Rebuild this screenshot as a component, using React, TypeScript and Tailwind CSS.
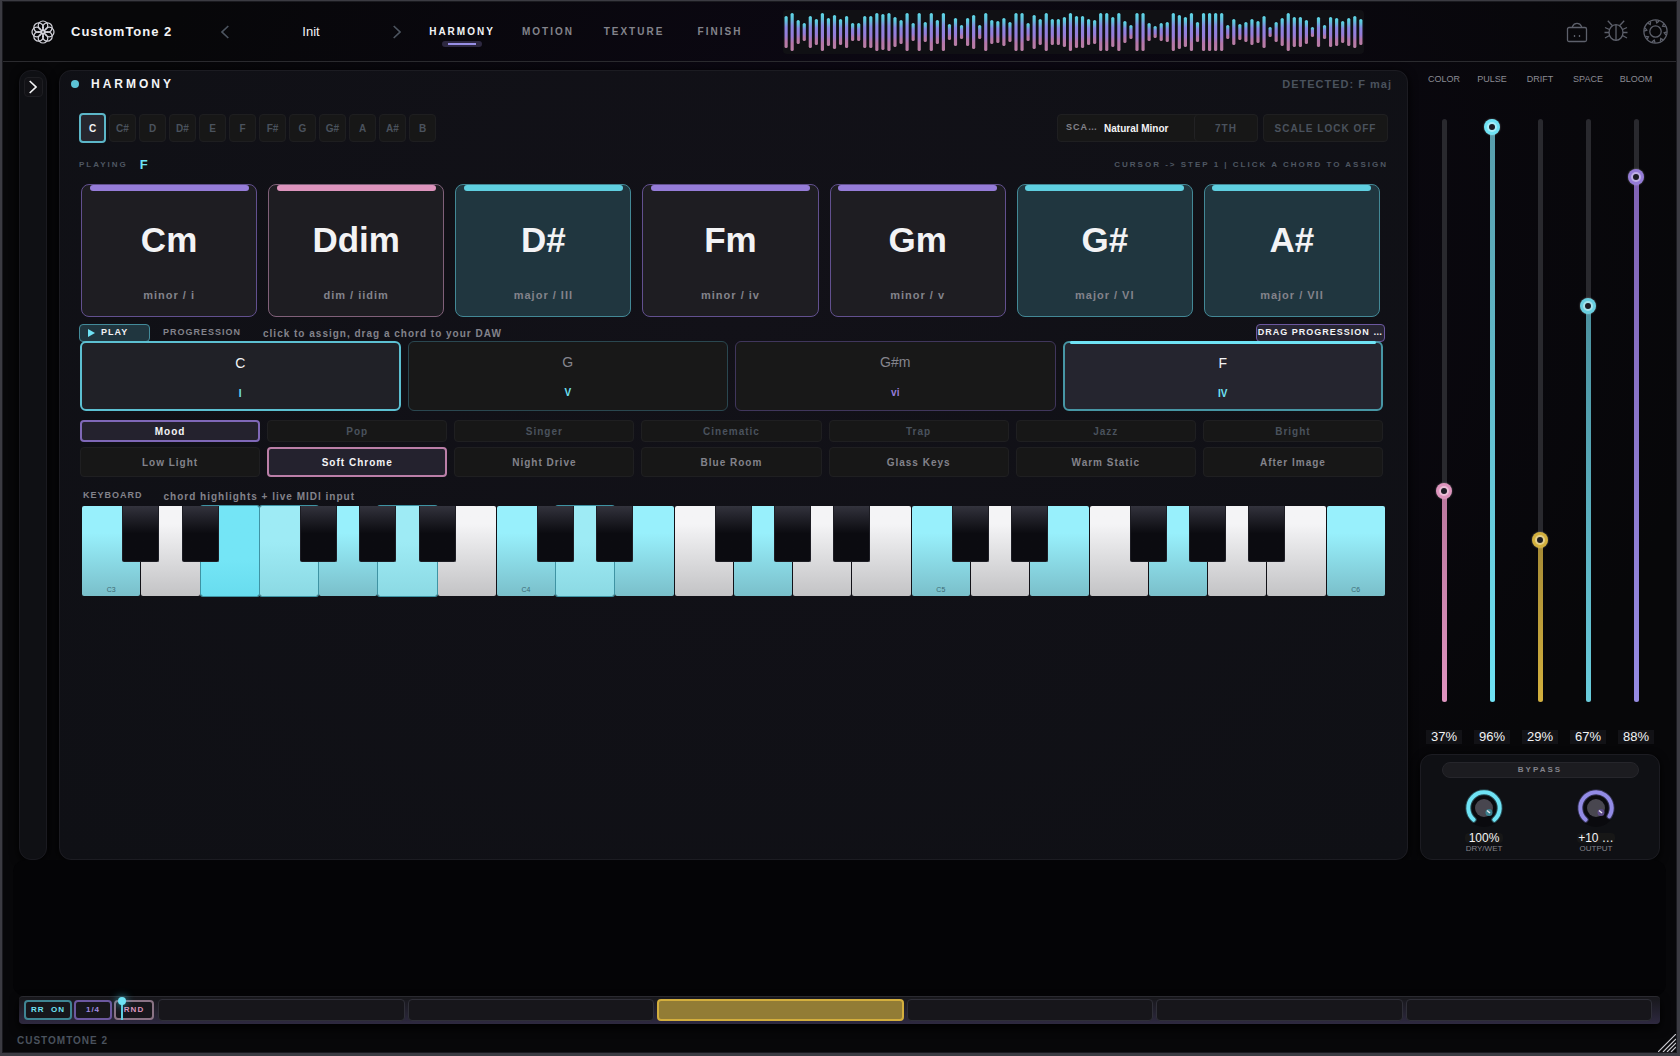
import React, { useState } from "react";
import clsx from "clsx";

const WAVE = [
  16, 19, 12, 9, 16, 13, 19, 14, 17, 13, 16, 9, 9, 16, 16, 19, 18, 19, 15, 12, 19, 9, 19, 10,
  19, 12, 19, 8, 14, 7, 14, 17, 7, 19, 12, 11, 14, 10, 19, 19, 9, 17, 13, 19, 13, 13, 15, 19,
  16, 16, 13, 12, 19, 19, 15, 19, 11, 7, 19, 19, 9, 6, 9, 10, 19, 17, 15, 19, 10, 19, 19, 19,
  19, 7, 13, 8, 10, 13, 11, 16, 5, 10, 14, 19, 15, 15, 12, 5, 15, 7, 15, 14, 11, 14, 16, 13,
];

const TABS = ["HARMONY", "MOTION", "TEXTURE", "FINISH"];
const ROOTS = ["C", "C#", "D", "D#", "E", "F", "F#", "G", "G#", "A", "A#", "B"];

const CHORDS = [
  { name: "Cm", role: "minor / i", tone: "violet" },
  { name: "Ddim", role: "dim / iidim", tone: "pink" },
  { name: "D#", role: "major / III", tone: "cyan" },
  { name: "Fm", role: "minor / iv", tone: "violet" },
  { name: "Gm", role: "minor / v", tone: "violet" },
  { name: "G#", role: "major / VI", tone: "cyan" },
  { name: "A#", role: "major / VII", tone: "cyan" },
];

const CARD_TONES: Record<string, { card: string; bar: string }> = {
  violet: { card: "bg-[#1e1d22] border-[#62508f]", bar: "bg-[#957cd8]" },
  pink: { card: "bg-[#1e1d22] border-[#806079]", bar: "bg-[#dd94bd]" },
  cyan: { card: "bg-[#20363f] border-[#438896]", bar: "bg-[#5fcfe0]" },
};

const STEPS = [
  { name: "C", numeral: "I", box: "border-2 border-[#5cc0d2] bg-[#202127] text-gray-100", num: "text-[#6fe3f5]" },
  { name: "G", numeral: "V", box: "border border-[#2a4750] bg-[#181818] text-[#85858d]", num: "text-[#6fe3f5]" },
  { name: "G#m", numeral: "vi", box: "border border-[#40365c] bg-[#181818] text-[#85858d]", num: "text-[#957cd8]" },
  { name: "F", numeral: "IV", box: "border-2 border-[#4796a5] bg-[#25252f] text-gray-100", num: "text-[#6fe3f5]" },
];

const MOODS = ["Mood", "Pop", "Singer", "Cinematic", "Trap", "Jazz", "Bright"];
const PRESETS = ["Low Light", "Soft Chrome", "Night Drive", "Blue Room", "Glass Keys", "Warm Static", "After Image"];

// one letter per white key: w = idle, c = in scale, h = in chord, p = pressed
const KEYS = "cwphchwchcwcwwcwcwcwwc".split("");
const KEY_STYLES: Record<string, string> = {
  w: "bg-gradient-to-b from-[#f4f4f6] from-20% to-[#c3c3c5]",
  c: "bg-gradient-to-b from-[#98f0fc] from-30% to-[#7abfca]",
  h: "bg-gradient-to-b from-[#9eebf5] from-40% to-[#8bd9e3] shadow-[0_0_0_1px_#3f93a3]",
  p: "bg-gradient-to-b from-[#74e5f6] from-60% to-[#68dcee] shadow-[0_0_0_1px_#3f93a3]",
};

const MACROS = [
  { name: "COLOR", value: 37, fill: "bg-gradient-to-b from-[#b9779d] to-[#e094c0]", thumb: "bg-[#dd94bd]" },
  { name: "PULSE", value: 96, fill: "bg-gradient-to-b from-[#579cab] to-[#6fe3f5]", thumb: "bg-[#6fe3f5]" },
  { name: "DRIFT", value: 29, fill: "bg-gradient-to-b from-[#a58a35] to-[#d3b03d]", thumb: "bg-[#d3b03d]" },
  { name: "SPACE", value: 67, fill: "bg-gradient-to-b from-[#4b909e] to-[#69ccdc]", thumb: "bg-[#69cfe0]" },
  { name: "BLOOM", value: 88, fill: "bg-gradient-to-b from-[#8062b4] to-[#958be4]", thumb: "bg-[#957cd8]" },
];

const Logo = () => (
  <svg viewBox="-12 -12 24 24" className="size-6" fill="none" stroke="#d3d3db" strokeWidth="1.2">
    {[0, 45, 90, 135, 180, 225, 270, 315].map((a) => (
      <circle key={a} cx="0" cy="-6.2" r="4.8" transform={`rotate(${a})`} />
    ))}
    <circle r="2" />
  </svg>
);

const Chevron = ({ flip, className }: { flip?: boolean; className?: string }) => (
  <svg viewBox="0 0 8 14" className={clsx("h-[14px] w-2", className)} fill="none" stroke="currentColor" strokeWidth="1.6">
    <path d={flip ? "M7.3 1 1 7l6.3 6" : "M.7 1 7 7 .7 13"} />
  </svg>
);

const LockIcon = () => (
  <svg viewBox="0 0 24 24" className="size-6" fill="none" stroke="#5d606b" strokeWidth="1.3">
    <rect x="2.5" y="7.5" width="19" height="14" rx="1.5" />
    <path d="M7.5 7.5V6.4C8.4 4.3 10 3.3 12 3.3s3.6 1 4.5 3.1v1.1M9.500 15v2M14.500 15v2" />
  </svg>
);

const BugIcon = () => (
  <svg viewBox="0 0 24 24" className="size-6" fill="none" stroke="#5d606b" strokeWidth="1.3">
    <ellipse cx="12" cy="12.5" rx="7" ry="7.8" />
    <path d="M12 5v15.500M8.500 5.800 3.800.8M15.500 5.800l4.700-5M5.400 9.500 1 7.500M5 12.500H.5M5.500 15.500 1 18M18.600 9.500 23 7.500M19 12.500h4.500M18.500 15.500 23 18" />
  </svg>
);

const GearIcon = () => (
  <svg viewBox="-12.5 -12.5 25 25" className="size-[25px]" fill="none" stroke="#5d606b" strokeWidth="1.3">
    <circle r="11.6" />
    <circle r="5.7" />
    {[10, 55, 100, 145, 190, 235, 280, 325].map((a) => (
      <path key={a} d="M-1.600-11.200-.2-8.800 1.700-11" transform={`rotate(${a})`} />
    ))}
  </svg>
);

const Waveform = () => (
  <svg viewBox="0 0 581 44" className="h-11 w-[581px] shrink-0 rounded bg-[#101014]">
    <defs>
      <linearGradient id="wave" x1="0" y1="0" x2="0" y2="1">
        <stop offset="0" stopColor="#5fd8e8" />
        <stop offset=".15" stopColor="#5fc4dc" />
        <stop offset=".35" stopColor="#8a86e0" />
        <stop offset=".6" stopColor="#957cd8" />
        <stop offset=".8" stopColor="#b577a8" />
        <stop offset="1" stopColor="#b87fa4" />
      </linearGradient>
    </defs>
    {WAVE.map((h, i) => (
      <rect key={i} x={1.5 + i * 6.05} y={22 - h} width="3.2" height={h * 2} rx="1.6" fill="url(#wave)" />
    ))}
  </svg>
);

const Header = () => {
  const [tab, setTab] = useState("HARMONY");

  return (
    <header className="flex h-[60px] shrink-0 items-center border-b border-[#2b2b2f] pl-[28px] pr-[8px]">
      <Logo />
      <h1 className="ml-4 w-[146px] text-[13px] font-bold tracking-[1px] text-gray-100">CustomTone 2</h1>
      <div className="flex w-[184px] items-center justify-between pl-[4px]">
        <button aria-label="Previous preset" className="text-[#4d5560]">
          <Chevron flip />
        </button>
        <span className="text-[13px] text-gray-100">Init</span>
        <button aria-label="Next preset" className="text-[#4d5560]">
          <Chevron />
        </button>
      </div>
      <nav className="ml-[18px] flex">
        {TABS.map((t) => (
          <button
            key={t}
            onClick={() => setTab(t)}
            className={clsx(
              "relative h-8 w-[86px] text-[10px] font-bold tracking-[2px]",
              t === tab ? "text-gray-100" : "text-[#83838b]"
            )}
          >
            {t}
            {t === tab && (
              <span className="absolute bottom-[1px] left-[23px] flex h-[6px] w-10 items-center justify-center rounded-sm bg-[#2d2840]">
                <span className="h-[2px] w-7 bg-[#988fe6]" />
              </span>
            )}
          </button>
        ))}
      </nav>
      <div className="ml-5 flex flex-1 items-center justify-between">
        <Waveform />
        <div className="flex items-center gap-[15px]">
          <button aria-label="Lock"><LockIcon /></button>
          <button aria-label="Report a bug"><BugIcon /></button>
          <button aria-label="Settings"><GearIcon /></button>
        </div>
      </div>
    </header>
  );
};

const KeySelector = () => {
  const [root, setRoot] = useState("C");

  return (
    <div className="mt-4 flex h-[30px] items-center">
      <div className="flex h-full items-center gap-[3px]">
        {ROOTS.map((r) => (
          <button
            key={r}
            onClick={() => setRoot(r)}
            className={clsx(
              "w-[27px] rounded text-[10px] font-bold",
              r === root
                ? "h-[30px] border-2 border-[#5cb6c8] bg-[#26262e] text-gray-100"
                : "h-7 border border-[#1e1e20] bg-[#171717] text-[#4a525d]"
            )}
          >
            {r}
          </button>
        ))}
      </div>
      <div className="ml-auto flex h-7 rounded border border-[#1f1f21] bg-[#171717]">
        <label className="flex w-[136px] items-center gap-[6px] pl-2 text-[9px] font-bold text-[#83838b]">
          <span className="tracking-[1px]">SCA…</span>
          <select className="appearance-none text-[10px] font-bold text-gray-100 outline-none">
            <option>Natural Minor</option>
          </select>
        </label>
        <button className="w-[63px] rounded border-l border-[#222224] text-[10px] font-bold tracking-[1px] text-[#4a525d]">
          7TH
        </button>
      </div>
      <button className="ml-[5px] h-7 w-[125px] rounded border border-[#1f1f21] bg-[#171717] text-[10px] font-bold tracking-[1px] text-[#4a525d]">
        SCALE LOCK OFF
      </button>
    </div>
  );
};

const ChordCards = () => (
  <div className="mt-2 grid grid-cols-7 gap-[11px] pl-[2px] pr-2">
    {CHORDS.map((c) => (
      <button
        key={c.name}
        className={clsx("flex h-[133px] flex-col items-center rounded-lg border", CARD_TONES[c.tone].card)}
      >
        <span className={clsx("h-[6px] w-[159px] max-w-full rounded-[3px]", CARD_TONES[c.tone].bar)} />
        <span className="mt-[29px] text-[35px] font-bold leading-[40px] text-[#f3f3f5]">{c.name}</span>
        <span className="mt-[27px] text-[11px] font-bold leading-4 tracking-[1px] text-[#83838b]">{c.role}</span>
      </button>
    ))}
  </div>
);

const Progression = () => (
  <>
    <div className="mt-[7px] flex h-[18px] items-center text-[9px] font-bold tracking-[1px]">
      <button className="flex h-full w-[71px] items-center rounded border border-[#438b9a] bg-[#20363f] pl-2 text-gray-100">
        <svg viewBox="0 0 7 8" className="mr-[6px] h-2 w-[7px]" fill="#6fe3f5">
          <path d="M0 0 7 4 0 8z" />
        </svg>
        PLAY
      </button>
      <span className="ml-[13px] text-[#83838b]">PROGRESSION</span>
      <span className="ml-[22px] text-[10px] text-[#83838b]">click to assign, drag a chord to your DAW</span>
      <button className="ml-auto mr-[3px] h-full w-[129px] whitespace-nowrap rounded border border-[#6c58a0] bg-[#272533] text-gray-100">
        DRAG PROGRESSION …
      </button>
    </div>
    <div className="-mt-px grid grid-cols-4 gap-[7px] pl-px pr-[5px]">
      {STEPS.map((s, i) => (
        <button
          key={s.name}
          className={clsx("relative flex h-[70px] flex-col items-center gap-[15px] rounded-md pt-[10px]", s.box)}
        >
          <span className="text-[14px] leading-5">{s.name}</span>
          <span className={clsx("text-[10px] font-bold leading-3", s.num)}>{s.numeral}</span>
          {i === 3 && <span className="absolute inset-x-[5px] top-[-2px] h-[3px] rounded-sm bg-[#6fe3f5]" />}
        </button>
      ))}
    </div>
  </>
);

const Presets = () => {
  const [mood, setMood] = useState("Mood");
  const [preset, setPreset] = useState("Soft Chrome");

  return (
    <div className="pl-px pr-[5px] text-[10px] font-bold tracking-[1px]">
      <div className="mt-[9px] grid grid-cols-7 gap-[7px]">
        {MOODS.map((m) => (
          <button
            key={m}
            onClick={() => setMood(m)}
            className={clsx(
              "h-[22px] rounded",
              m === mood
                ? "border-2 border-[#7f68b8] bg-[#24222e] text-gray-100"
                : "border border-[#1f1f21] bg-[#171717] text-[#4a525d]"
            )}
          >
            {m}
          </button>
        ))}
      </div>
      <div className="mt-[5px] grid grid-cols-7 gap-[7px]">
        {PRESETS.map((p) => (
          <button
            key={p}
            onClick={() => setPreset(p)}
            className={clsx(
              "h-[30px] rounded",
              p === preset
                ? "border-2 border-[#bb7fa8] bg-[#24222e] text-gray-100"
                : "border border-[#1f1f21] bg-[#171717] text-[#83838b]"
            )}
          >
            {p}
          </button>
        ))}
      </div>
    </div>
  );
};

const Keyboard = () => (
  <>
    <div className="mt-[9px] flex h-5 items-center gap-[21px] pl-1 text-[9px] font-bold tracking-[1px] text-[#83838b]">
      <span>KEYBOARD</span>
      <span className="text-[10px]">chord highlights + live MIDI input</span>
    </div>
    <div className="mx-[3px] flex h-[90px] gap-px">
      {KEYS.map((k, i) => (
        <div
          key={i}
          className={clsx("relative flex flex-1 items-end justify-center rounded-[2px] text-[7px] text-[#3d6a74]", KEY_STYLES[k])}
        >
          {i % 7 === 0 && <span className="leading-[13px]">C{3 + i / 7}</span>}
          {[0, 1, 3, 4, 5].includes(i % 7) && i < 21 && (
            <span className="absolute right-[-19px] top-0 z-10 h-14 w-[37px] rounded-b-[2px] border border-t-0 border-[#1d1d24] bg-gradient-to-b from-[#33333d] to-[#0b0b10] to-50%" />
          )}
        </div>
      ))}
    </div>
  </>
);

const MacroSlider = ({ macro }: { macro: (typeof MACROS)[number] }) => {
  const [value, setValue] = useState(macro.value);
  const pos = 50 + (value - 50) * 1.056;

  return (
    <label className="flex flex-1 flex-col items-center">
      <span className="h-[18px] text-[9px] leading-[18px] text-[#8b8b93]">{macro.name}</span>
      <div className="relative mt-[31px] flex w-4 flex-1 justify-center">
        <div className="h-full w-[5px] rounded-full bg-[#29292e]" />
        <div className={clsx("absolute bottom-0 w-[5px] rounded-full", macro.fill)} style={{ height: `${pos}%` }} />
        <div
          className={clsx("absolute flex size-4 translate-y-1/2 items-center justify-center rounded-full shadow-[0_0_2px_#ffffff60]", macro.thumb)}
          style={{ bottom: `${pos}%` }}
        >
          <span className="flex size-[10px] items-center justify-center rounded-full bg-white/40">
            <span className="size-[6px] rounded-full bg-[#1c1c24]" />
          </span>
        </div>
        <input
          type="range"
          value={value}
          onChange={(e) => setValue(Number(e.target.value))}
          className="absolute inset-0 h-full w-4 opacity-0 [direction:rtl] [writing-mode:vertical-lr]"
        />
      </div>
      <span className="mt-7 h-[14px] w-9 bg-[#121216] text-center text-[13px] leading-[14px] text-gray-100">{value}%</span>
    </label>
  );
};

const Knob = ({ label, value, color, end, dot }: { label: string; value: string; color: string; end: string; dot: string }) => (
  <div className="flex w-14 flex-col items-center">
    <svg viewBox="-20 -20 40 40" className="size-10" fill="none">
      <circle r="19" fill="#0a0a0e" />
      <path d={`M-10.300 11.800A15.700 15.700 0 1 1 ${end}`} stroke={color} strokeWidth="6" strokeLinecap="round" opacity=".3" />
      <path d={`M-10.300 11.800A15.700 15.700 0 1 1 ${end}`} stroke={color} strokeWidth="4" strokeLinecap="round" />
      <circle r="9" fill="#48464f" />
      <circle cx="5" cy="4.5" r="3.5" fill={dot} />
      <path d="M3 2.500 6 5" stroke="#e8e8ee" strokeWidth="1.5" />
    </svg>
    <span className="mt-[5px] h-[10px] w-[38px] rounded-sm bg-[#171717] text-center text-[12px] leading-[10px] text-gray-100">
      {value}
    </span>
    <span className="mt-px text-[8px] leading-[10px] text-[#83838b]">{label}</span>
  </div>
);

const Macros = () => (
  <aside className="flex w-[240px] shrink-0 flex-col">
    <div className="flex flex-1">
      {MACROS.map((m) => (
        <MacroSlider key={m.name} macro={m} />
      ))}
    </div>
    <div className="mt-[10px] flex h-[106px] flex-col items-center rounded-xl border border-[#1c1c22] bg-[#0f1014] pt-[7px] shadow-[0_2px_8px_#000]">
      <button className="h-4 w-[197px] rounded-full border border-[#26262b] bg-[#1c1c20] text-[8px] font-bold leading-[14px] tracking-[2px] text-[#83838b]">
        BYPASS
      </button>
      <div className="mt-[10px] flex gap-14">
        <Knob label="DRY/WET" value="100%" color="#6fe3f5" end="10.3 11.8" dot="#3a7f8d" />
        <Knob label="OUTPUT" value="+10 …" color="#928be6" end="13.3 8.3" dot="#5c4a86" />
      </div>
    </div>
  </aside>
);

const StepBar = () => (
  <div className="mx-[16px] flex h-7 shrink-0 items-center rounded border-t border-[#2a2a30] bg-gradient-to-b from-[#17171b] to-[#2e2940] pb-[2px] pl-[5px] pr-2 shadow-[0_4px_10px_#000]">
    <div className="flex h-5 gap-[2px] text-[8px] font-bold tracking-[1px]">
      <button className="w-12 whitespace-pre rounded border-2 border-[#3f8593] bg-[#17161b] text-[#6fe3f5]">RR  ON</button>
      <button className="w-[38px] rounded border-2 border-[#6c58a0] bg-[#17161b] text-[#a08be0]">1/4</button>
      <button className="relative w-10 rounded border-2 border-[#8a7385] bg-[#17161b] text-[#dd94bd]">
        RND
        <span className="absolute -top-1 left-[5px] h-[22px] w-[2px] bg-[#5fcfe0]" />
        <span className="absolute -top-[5px] left-[2px] size-2 rounded-full bg-[#6fe3f5] shadow-[0_0_8px_#3fb8cc]" />
      </button>
    </div>
    <div className="ml-1 grid h-[22px] flex-1 grid-cols-6 gap-[3px]">
      {[0, 1, 2, 3, 4, 5].map((i) => (
        <button
          key={i}
          aria-label={`Step ${i + 1}`}
          className={clsx(
            "rounded",
            i === 2 ? "border-2 border-[#d3ae3d] bg-[#927c35]" : "border border-[#2f2f38] bg-[#17161b]"
          )}
        />
      ))}
    </div>
  </div>
);

const App = () => {
  return (
    <div className="flex min-h-screen bg-[#3b3b42] pb-[3px] pl-[2px] pr-[3px] pt-px font-['Liberation_Sans',Arial,sans-serif]">
      <div className="relative flex flex-1 flex-col border border-[#1a1a1f] bg-[#070709] bg-[radial-gradient(ellipse_800px_700px_at_55%_25%,#0d0816,#070709)]">
        <Header />
        <main className="flex flex-1 gap-3 pl-[16px] pr-[16px] pt-2">
          <aside className="flex w-7 shrink-0 flex-col items-center rounded-xl border border-[#1a1a20] bg-[#0f1014] pt-[6px] shadow-[0_2px_10px_#000]">
            <button
              aria-label="Open sidebar"
              className="flex h-5 w-[19px] items-center justify-center rounded border border-[#1e1e22] bg-[#121216] text-gray-100"
            >
              <Chevron />
            </button>
          </aside>
          <section className="min-w-0 flex-1 rounded-xl border border-[#1c1c22] bg-[radial-gradient(ellipse_at_50%_30%,#121118,#0f1015)] px-[19px] shadow-[0_2px_10px_#000]">
            <div className="-ml-2 flex h-[26px] items-center">
              <span className="size-2 rounded-full bg-[#5cc3d6]" />
              <h2 className="ml-3 text-[12px] font-bold tracking-[3px] text-gray-100">HARMONY</h2>
              <span className="-mr-1 ml-auto text-[11px] font-bold tracking-[1px] text-[#4a525d]">DETECTED: F maj</span>
            </div>
            <KeySelector />
            <div className="mt-[11px] flex h-[22px] items-center text-[8px] font-bold text-[#4f5762]">
              <span className="tracking-[2px]">PLAYING</span>
              <span className="ml-3 text-[13px] text-[#6fe3f5]">F</span>
              <span className="ml-auto whitespace-pre tracking-[2px]">CURSOR -&gt; STEP 1 | CLICK A CHORD TO ASSIGN</span>
            </div>
            <ChordCards />
            <Progression />
            <Presets />
            <Keyboard />
          </section>
          <Macros />
        </main>
        <div className="mx-[10px] h-[136px] shrink-0 rounded-xl bg-[#040406]" />
        <StepBar />
        <footer className="flex h-7 shrink-0 items-center pl-[14px] pt-[4px] text-[10px] font-bold tracking-[1px] text-[#4a525d]">
          CUSTOMTONE 2
        </footer>
        <svg viewBox="0 0 18 18" className="absolute bottom-0 right-0 size-[18px]" stroke="#c9c9cf" strokeWidth="1.2">
          <path d="M0 18 18 0M5 18 18 5M9 18l9-9M13 18l5-5" />
        </svg>
      </div>
    </div>
  );
};

export default App;
